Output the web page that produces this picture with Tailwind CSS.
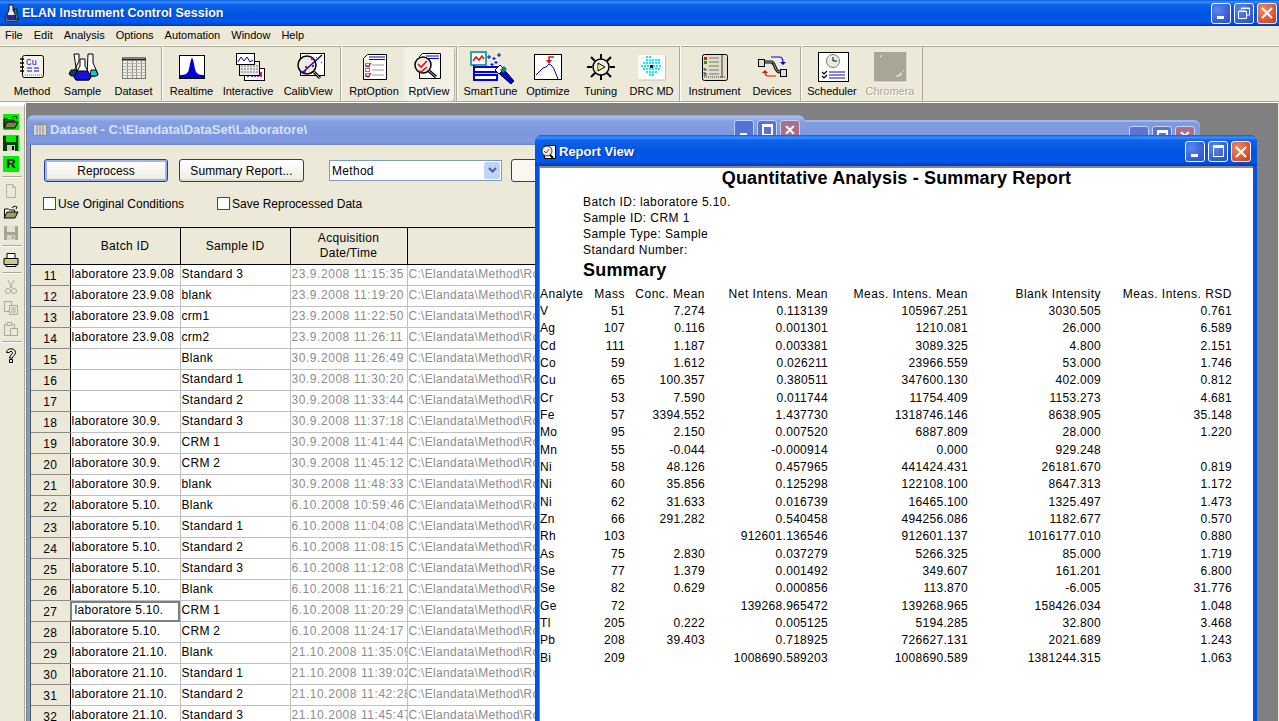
<!DOCTYPE html>
<html lang="en">
<head>
  <meta charset="UTF-8">
  <title>ELAN Instrument Control Session</title>
  <script src="https://cdn.jsdelivr.net/npm/@tailwindcss/browser@4"></script>
</head>
<body class="m-0 overflow-hidden bg-[#808080]">
<div class="relative flex h-[721px] w-[1279px] flex-col overflow-hidden font-['Liberation_Sans',Arial,sans-serif] text-[11px] text-black">

  <!-- main title bar -->
  <div class="flex h-[26px] shrink-0 items-center bg-[linear-gradient(180deg,#0a5fe8_0%,#3a8dfb_8%,#0d62ea_18%,#0054e3_55%,#0058ee_85%,#0046c8_94%,#003aa8_100%)] pl-[4px] pr-[2px]">
    <svg width="16" height="18" viewBox="0 0 16 18" class="mr-[2px]">
      <path d="M5 1h4v5l5 9-1 2H2l-1-2 4-9z" fill="#e8e8e8" stroke="#111"/>
      <path d="M3 11h8l2 4-1 1H3l-1-1z" fill="#2a2a8a"/>
      <path d="M10 5h3v6l2 4h-3z" fill="#1d9a9a" stroke="#111"/>
    </svg>
    <span class="text-[12.500px] font-bold text-white [text-shadow:1px_1px_0_#0a3aa0]">ELAN Instrument Control Session</span>
    <div class="ml-auto flex gap-[3px]">
      <div class="flex h-[21px] w-[20px] items-end rounded-[3px] border border-white bg-[radial-gradient(circle_at_30%_30%,#5c86ef,#2448c8)] pb-[4px] pl-[5px]"><div class="h-[3px] w-[7px] bg-white"></div></div>
      <div class="flex h-[21px] w-[20px] items-center justify-center rounded-[3px] border border-white bg-[radial-gradient(circle_at_30%_30%,#5c86ef,#2448c8)]">
        <svg width="12" height="12" viewBox="0 0 12 12" fill="none" stroke="#fff"><path d="M3.500 2.500V1h8v7H9"/><path d="M.5 4.500h8v7h-8z"/><path d="M1 4h7M4 1.500h7" stroke-width="1"/></svg>
      </div>
      <div class="flex h-[21px] w-[20px] items-center justify-center rounded-[3px] border border-white bg-[radial-gradient(circle_at_30%_30%,#ee8a66,#c93a14)]">
        <svg width="12" height="12" viewBox="0 0 12 12" stroke="#fff" stroke-width="2"><path d="M1 1l10 10M11 1L1 11"/></svg>
      </div>
    </div>
  </div>

  <!-- menu bar -->
  <div class="flex h-[19px] shrink-0 items-center gap-[11px] bg-[#ece9d8] pl-[5px]">
    <span>File</span><span>Edit</span><span>Analysis</span><span>Options</span><span>Automation</span><span>Window</span><span>Help</span>
  </div>

  <!-- toolbar -->
  <div class="flex h-[58px] shrink-0 border-y border-y-white bg-[#ece9d8] shadow-[inset_0_-1px_0_#a7a491,inset_0_1px_0_#aca899]">
    <div class="flex h-[55px] items-stretch border-r border-r-[#aca899] pl-[7px] pr-[2px] pt-[4px]">
      <div class="flex w-[50px] flex-col items-center">
        <svg width="40" height="34" viewBox="0 0 40 34" class="overflow-visible">
          <rect x="10.500" y="5.500" width="21" height="22" rx="2" fill="#f5f2e2" stroke="#000"/>
          <path d="M8 9h4M8 13h4M8 17h4M8 21h4" stroke="#000" stroke-width="1.500"/>
          <path d="M13 25h18" stroke="#777" stroke-dasharray="1 1"/>
          <text x="14" y="15" font-size="9" fill="#1010e0" font-family="Liberation Mono">Cu</text>
          <path d="M15 18h5M22 18h5M15 21h5M22 21h5" stroke="#1010e0"/>
        </svg>
        <span class="-mt-[1px]">Method</span>
      </div>
      <div class="flex w-[51px] flex-col items-center">
        <svg width="40" height="34" viewBox="0 0 40 34" class="overflow-visible">
          <path d="M11 4h5v7l-5 10-3 3h6z" fill="#fff" stroke="#000"/>
          <path d="M8 20l-2 4 2 2h7l3-6z" fill="#123a6a" stroke="#000"/>
          <path d="M25 4h5v9l5 11-3 2h-8z" fill="#fff" stroke="#000"/>
          <path d="M28 20h5l2 5-2 1h-6z" fill="#18c8c8" stroke="#000"/>
          <path d="M17 9h5v7l6 11-2 3H13l-2-3 6-11z" fill="#fff" stroke="#000"/>
          <path d="M14.500 21h10l3.500 6-2 3H13l-2-3z" fill="#1414d8" stroke="#000"/>
        </svg>
        <span class="-mt-[1px]">Sample</span>
      </div>
      <div class="flex w-[51px] flex-col items-center">
        <svg width="40" height="34" viewBox="0 0 40 34">
          <rect x="8.500" y="7.500" width="23" height="21" fill="#efece0" stroke="#777"/>
          <path d="M8 9.500h24" stroke="#222" stroke-width="2"/>
          <path d="M13.500 10v18M18.500 10v18M22.500 10v18M27.500 10v18" stroke="#8a8a8a"/>
          <path d="M9 13.500h22M9 16.500h22M9 19.500h22M9 22.500h22M9 25.500h22" stroke="#b5b5b5"/>
        </svg>
        <span class="-mt-[1px]">Dataset</span>
      </div>
    </div>
    <div class="flex h-[55px] items-stretch border-r border-l border-r-[#aca899] border-l-white pl-[2px] pr-[2px] pt-[4px]">
      <div class="flex w-[53px] flex-col items-center">
        <svg width="40" height="34" viewBox="0 0 40 34">
          <rect x="7.500" y="5.500" width="25" height="23" fill="#fff" stroke="#000"/>
          <path d="M8 25c5 0 8-1 9-6s2-11 3-11 2 6 3 11 4 6 9 6v3H8z" fill="#0000d0"/>
        </svg>
        <span class="-mt-[1px]">Realtime</span>
      </div>
      <div class="flex w-[60px] flex-col items-center">
        <svg width="40" height="34" viewBox="0 0 40 34" class="overflow-visible">
          <rect x="16.500" y="18.500" width="20" height="12" fill="#fff" stroke="#000"/>
          <path d="M20 27v-2M24 27v-4M27 27v-3M30 27v-5" stroke="#5040c0" stroke-width="2"/><path d="M33 27v-5" stroke="#e01060" stroke-width="2"/>
          <rect x="11.500" y="11.500" width="20" height="14" fill="#e8e8e8" stroke="#000"/>
          <path d="M13 16h17M13 19h17M13 22h17" stroke="#777" stroke-dasharray="2 1"/>
          <rect x="8.500" y="3.500" width="18" height="11" fill="#fff" stroke="#000"/>
          <path d="M10 12l3-5 3 4 3-4 3 5 3-2" fill="none" stroke="#0000d0"/>
        </svg>
        <span class="-mt-[1px]">Interactive</span>
      </div>
      <div class="flex w-[60px] flex-col items-center">
        <svg width="40" height="34" viewBox="0 0 40 34" class="overflow-visible">
          <rect x="12.500" y="3.500" width="24" height="22" fill="#fff" stroke="#000"/>
          <circle cx="19" cy="15" r="9" fill="#ecece4" stroke="#000" stroke-width="1.500"/>
          <path d="M14 23L34 5" stroke="#0000e0" stroke-width="1.500"/>
          <path d="M23 8h2v2h-2zM28 7h1v1h-1zM17 16h2v2h-2zM24 15h2v2h-2zM33 12h1v1h-1zM16 21h2v2h-2z" fill="#e01010"/>
          <path d="M26 22l6 6" stroke="#000" stroke-width="3"/><path d="M26 22l6 6" stroke="#bbb"/>
        </svg>
        <span class="-mt-[1px]">CalibView</span>
      </div>
    </div>
    <div class="flex h-[55px] items-stretch border-r border-l border-r-[#aca899] border-l-white pl-[2px] pr-[2px] pt-[4px]">
      <div class="flex w-[60px] flex-col items-center">
        <svg width="40" height="34" viewBox="0 0 40 34">
          <path d="M9.500 8.500l4-4h19v25h-23z" fill="#fff" stroke="#000"/>
          <path d="M15 7h16" stroke="#0000d0" stroke-width="1"/><path d="M15 9.500h16" stroke="#0000d0"/>
          <rect x="11.500" y="13.500" width="4" height="3" fill="#fff" stroke="#888"/><rect x="11.500" y="18.500" width="4" height="3" fill="#fff" stroke="#888"/><rect x="11.500" y="23.500" width="4" height="3" fill="#fff" stroke="#888"/>
          <path d="M12 15l2 2 3-4M12 25l2 2 3-4" fill="none" stroke="#e01010" stroke-width="1.200"/>
          <path d="M18 15h12M18 20h12M18 25h12" stroke="#999"/>
        </svg>
        <span class="-mt-[1px]">RptOption</span>
      </div>
      <div class="-mt-[3px] flex w-[50px] flex-col items-center rounded-[3px] bg-[#f3f1e6] pt-[3px] shadow-[1px_1px_1px_#b5b2a0]">
        <svg width="40" height="34" viewBox="0 0 40 34" class="overflow-visible">
          <path d="M10.500 6.500l3-3h18v25h-21z" fill="#fff" stroke="#000"/>
          <path d="M17 6h13M17 8.500h13" stroke="#0000d0"/>
          <circle cx="14" cy="15" r="8" fill="#ecece4" stroke="#000" stroke-width="1.500"/>
          <path d="M9 14l3 3 6-6M10 21l2 1 6-5" fill="none" stroke="#e01010" stroke-width="1.600"/>
          <path d="M20 21l7 6" stroke="#000" stroke-width="3"/><path d="M20 21l7 6" stroke="#bbb"/>
        </svg>
        <span class="-mt-[1px]">RptView</span>
      </div>
    </div>
    <div class="flex h-[55px] items-stretch border-r border-l border-r-[#aca899] border-l-white pl-[2px] pr-[2px] pt-[4px]">
      <div class="flex w-[61px] flex-col items-center">
        <svg width="48" height="34" viewBox="0 0 48 34" class="overflow-visible">
          <rect x="4" y="2" width="15" height="13" fill="#fff" stroke="#22a8a8" stroke-width="2"/>
          <path d="M6 11l3-4 3 3 3-4 2 3" fill="none" stroke="#e01010" stroke-width="1.500"/>
          <rect x="7" y="17" width="23" height="5" fill="#fff" stroke="#0000e0" stroke-width="2"/>
          <rect x="7" y="25" width="23" height="5" fill="#fff" stroke="#0000e0" stroke-width="2"/>
          <path d="M7 15v13" stroke="#0000e0" stroke-width="2"/>
          <path d="M28 20l5-5 14 16-3 3z" fill="#0000d0" stroke="#000"/>
          <path d="M28 20l5-5 4 4-5 5z" fill="#fff" stroke="#000"/>
          <path d="M33 20l4-4 3 3-4 4z" fill="#138080"/>
          <path d="M22 5v4M20 7h4M27 7v3M25.500 8.500h3M32 3v4M30 5h4M25 13v3M23.500 14.500h3M29 11v3M27.500 12.500h3" stroke="#0000e0"/>
        </svg>
        <span class="-mt-[1px]">SmartTune</span>
      </div>
      <div class="flex w-[54px] flex-col items-center">
        <svg width="40" height="34" viewBox="0 0 40 34">
          <rect x="6.500" y="4.500" width="27" height="25" fill="#fff" stroke="#000"/>
          <path d="M8 25l7-7 3-1 3-3 2 1 3 4 4 10" fill="none" stroke="#0000d0"/>
          <path d="M26 7h-5v5" fill="none" stroke="#e01010" stroke-width="1.500"/><path d="M18 10l3 4 3-4z" fill="#e01010"/>
        </svg>
        <span class="-mt-[1px]">Optimize</span>
      </div>
      <div class="flex w-[51px] flex-col items-center">
        <svg width="40" height="34" viewBox="0 0 40 34">
          <circle cx="20" cy="17" r="8" fill="#f2efdf" stroke="#000" stroke-width="1.500"/>
          <path d="M20 4v5M20 25v5M6 17h5M29 17h5M10 7l4 4M30 7l-4 4M10 27l4-4M30 27l-4-4" stroke="#000" stroke-width="2"/>
          <path d="M17 13l7 4-7 4z" fill="#e8e8e0" stroke="#000"/><path d="M17 15l3 2-3 2z" fill="#f0e020"/>
        </svg>
        <span class="-mt-[1px]">Tuning</span>
      </div>
      <div class="flex w-[51px] flex-col items-center">
        <svg width="40" height="34" viewBox="0 0 40 34">
          <rect x="6.500" y="5" width="27" height="25" fill="#fff"/>
          <path d="M33.500 5v25H6.500" fill="none" stroke="#c0c0c0"/>
          <path d="M14 6h2v2h-2zM17 6h2v2h-2zM14 9h2v2h-2zM17 9h2v2h-2zM20 9h2v2h-2zM23 9h2v2h-2zM26 9h2v2h-2zM11 12h2v2h-2zM14 12h2v2h-2zM17 12h2v2h-2zM20 12h2v2h-2zM23 12h2v2h-2zM26 12h2v2h-2zM9 15h2v2H9zM12 15h2v2h-2zM15 15h2v2h-2zM21 15h2v2h-2zM24 15h2v2h-2zM27 15h2v2h-2zM11 18h2v2h-2zM14 18h2v2h-2zM17 18h2v2h-2zM20 18h2v2h-2zM23 18h2v2h-2zM26 18h2v2h-2zM14 21h2v2h-2zM17 21h2v2h-2zM20 21h2v2h-2zM23 21h2v2h-2zM17 24h2v2h-2zM20 24h2v2h-2z" fill="#16eaea"/>
          <rect x="18" y="15" width="3" height="3" fill="#10107a"/>
        </svg>
        <span class="-mt-[1px]">DRC MD</span>
      </div>
    </div>
    <div class="flex h-[55px] items-stretch border-r border-l border-r-[#aca899] border-l-white pl-[2px] pr-[2px] pt-[4px]">
      <div class="flex w-[63px] flex-col items-center">
        <svg width="40" height="34" viewBox="0 0 40 34">
          <rect x="7.500" y="4.500" width="25" height="26" rx="2" fill="#e2dec8" stroke="#000"/>
          <path d="M9 7h3v3H9z" fill="#e01010"/><path d="M9 11h3v3H9z" fill="#10a010"/>
          <path d="M14 8h10M14 12h10M14 16h10M14 20h10M14 24h10M9 18v2h3M9 22v2h3M9 26v-1h3" stroke="#777"/>
          <path d="M27 5v23" stroke="#333"/><path d="M9 27h22" stroke="#333" stroke-dasharray="1 1"/>
        </svg>
        <span class="-mt-[1px]">Instrument</span>
      </div>
      <div class="flex w-[52px] flex-col items-center">
        <svg width="40" height="34" viewBox="0 0 40 34">
          <rect x="6.500" y="9.500" width="6" height="7" fill="#ddd" stroke="#000"/><rect x="28.500" y="19.500" width="6" height="7" fill="#ddd" stroke="#000"/>
          <path d="M13 12h6c5 0 3 10 9 10" fill="none" stroke="#000" stroke-width="3"/><path d="M13 12h6c5 0 3 10 9 10" fill="none" stroke="#bbb"/>
          <path d="M19 7h8c3 0 4 2 4 5" fill="none" stroke="#0000e0" stroke-width="1.200"/><path d="M28 12h6l-3 3z" fill="#0000e0"/>
          <path d="M24 26h-8c-2 0-3-1-3-4" fill="none" stroke="#e01010" stroke-width="1.200"/><path d="M10 23l3-3 3 3z" fill="#e01010"/>
        </svg>
        <span class="-mt-[1px]">Devices</span>
      </div>
    </div>
    <div class="flex h-[55px] items-stretch border-l border-r border-l-white border-r-[#aca899] pl-[2px] pr-[2px] pt-[4px]">
      <div class="flex w-[56px] flex-col items-center">
        <svg width="40" height="34" viewBox="0 0 40 34">
          <rect x="6.500" y="2.500" width="30" height="29" fill="#fff" stroke="#000"/>
          <circle cx="21" cy="11" r="6.500" fill="#ecebdc" stroke="#777"/>
          <path d="M21 7v4h4" fill="none" stroke="#000"/>
          <path d="M17 22h16M17 25h16M17 28h16" stroke="#10109a"/>
          <path d="M10 22l2 2 3-3M10 26l2 2 3-3" fill="none" stroke="#000" stroke-width="1.200"/>
        </svg>
        <span class="-mt-[1px]">Scheduler</span>
      </div>
      <div class="flex w-[60px] flex-col items-center">
        <svg width="40" height="34" viewBox="0 0 40 34" class="overflow-visible">
          <rect x="4" y="2" width="33" height="30" fill="#a9a597"/>
          <path d="M37 2v30H4" fill="none" stroke="#f7f6ef"/>
          <path d="M10 7l2-2M30 23h1v2h-2v1h-3M33 21h1" stroke="#f7f6ef" fill="none"/>
        </svg>
        <span class="-mt-[1px] text-[#a9a597] [text-shadow:1px_1px_0_#fff]">Chromera</span>
      </div>
    </div>
  </div>

  <!-- workspace -->
  <div class="relative flex min-h-0 flex-1 bg-[#808080]">
    <!-- left toolbar -->
    <div class="flex w-[25px] shrink-0 flex-col border-t-[3px] border-r border-t-white border-r-[#aca899] bg-[#ece9d8] pl-[3px] pt-[5px] shadow-[1px_0_0_#f8f7f0]">
      <div class="flex h-[21px] items-center"><svg width="16" height="16" viewBox="0 0 16 16"><rect width="16" height="16" fill="#00f000"/><path d="M1 13V5h4l1 1h5v2" fill="#008000" stroke="#000"/><path d="M1 14l3-6h11l-3 6z" fill="#808040" stroke="#000"/><path d="M9 4c1-2 3-2 5-1l-1 2" fill="none" stroke="#000"/></svg></div>
      <div class="flex h-[21px] items-center"><svg width="16" height="16" viewBox="0 0 16 16"><rect width="16" height="16" fill="#00f000"/><path d="M0 1h15v15H0z" fill="#004000"/><path d="M3 1h10v6H3z" fill="#00f000"/><path d="M4 10h8v6H4z" fill="#c0d0c0"/><path d="M9 11h2v4H9z" fill="#000"/></svg></div>
      <div class="flex h-[21px] items-center"><div class="flex h-[16px] w-[16px] items-center justify-center bg-[#00f000] text-[13px] font-bold leading-none">R</div></div>
      <div class="mb-[2px] mt-[2px] h-[2px] w-[20px] -translate-x-[1px] border-y border-y-[#aca899] border-b-white"></div>
      <div class="flex h-[21px] items-center"><svg width="16" height="16" viewBox="0 0 16 16"><path d="M3.500 1.500h6l3 3v10h-9z" fill="#ece9d8" stroke="#b5b2a0"/><path d="M9.500 1.500v3h3" fill="none" stroke="#b5b2a0"/></svg></div>
      <div class="flex h-[21px] items-center"><svg width="16" height="16" viewBox="0 0 16 16"><path d="M1.500 13V5h4l1 1h5v2" fill="#fff" stroke="#000"/><path d="M1 14l3-6h11l-3 6z" fill="#a09c70" stroke="#000"/><path d="M9 4c1-2 3-2 5-1l-1 2" fill="none" stroke="#000"/></svg></div>
      <div class="flex h-[21px] items-center"><svg width="16" height="16" viewBox="0 0 16 16"><path d="M1 1h14v14H1z" fill="#a8a596"/><path d="M4 1h8v6H4z" fill="#e4e1d2"/><path d="M4 10h8v5H4z" fill="#d8d5c6"/><path d="M9 11h2v3H9z" fill="#a8a596"/></svg></div>
      <div class="mb-[2px] mt-[2px] h-[2px] w-[20px] -translate-x-[1px] border-y border-y-[#aca899] border-b-white"></div>
      <div class="flex h-[21px] items-center"><svg width="16" height="16" viewBox="0 0 16 16"><path d="M4 1.500h8v5H4z" fill="#fff" stroke="#000"/><path d="M1 6.500h14v6H1z" fill="#c8c5b5" stroke="#000"/><path d="M3 12.500h10v2H3z" fill="#fff" stroke="#000"/><path d="M3 9h6" stroke="#e0d020" stroke-width="2"/></svg></div>
      <div class="mb-[2px] mt-[2px] h-[2px] w-[20px] -translate-x-[1px] border-y border-y-[#aca899] border-b-white"></div>
      <div class="flex h-[21px] items-center"><svg width="16" height="16" viewBox="0 0 16 16" fill="none" stroke="#aca899"><path d="M5 1l4 8M11 1L7 9"/><circle cx="5" cy="12" r="2.500"/><circle cx="11" cy="12" r="2.500"/></svg></div>
      <div class="flex h-[21px] items-center"><svg width="16" height="16" viewBox="0 0 16 16" fill="#ece9d8" stroke="#aca899"><path d="M1.500 1.500h7v10h-7z"/><path d="M6.500 5.500h8v9h-8z"/><path d="M8 8h5M8 10h5M8 12h5"/></svg></div>
      <div class="flex h-[21px] items-center"><svg width="16" height="16" viewBox="0 0 16 16" fill="#ece9d8" stroke="#aca899"><path d="M1.500 3.500h10v11h-10z"/><path d="M4 1.500h5v3H4z"/><path d="M7.500 7.500h7v7h-7z"/></svg></div>
      <div class="mb-[2px] mt-[2px] h-[2px] w-[20px] -translate-x-[1px] border-y border-y-[#aca899] border-b-white"></div>
      <div class="flex h-[21px] items-center pl-[2px]"><svg width="12" height="15" viewBox="0 0 12 15" fill="#ece9d8" stroke="#000"><path d="M1.500 4.500c0-5 9-5 9 0 0 3-3 3-3 5.500h-3c0-3 3-3 3-5.500 0-1.500-3-1.500-3 0z"/><path d="M4.500 11.500h3v3h-3z"/></svg></div>
    </div>

    <!-- window behind dataset -->
    <div class="absolute left-[725px] top-[17px] h-[40px] w-[475px] rounded-t-[6px] bg-[#7f9be0] shadow-[inset_0_2px_0_#a2b7ea]">
      <div class="absolute right-[5px] top-[6px] flex gap-[3px]">
        <div class="h-[21px] w-[20px] rounded-[3px] border border-[#c5d2f0] bg-[#5b74d2]"></div>
        <div class="h-[21px] w-[20px] rounded-[3px] border border-[#c5d2f0] bg-[#5b74d2] pl-[4px] pt-[3px]"><div class="h-[12px] w-[11px] border-2 border-t-[3px] border-white"></div></div>
        <div class="h-[21px] w-[20px] rounded-[3px] border border-[#c5d2f0] bg-[#ab7089] text-center text-[14px] font-bold leading-[18px] text-white">✕</div>
      </div>
    </div>

    <!-- dataset window -->
    <div class="absolute left-[27px] top-[12px] flex h-[700px] w-[778px] flex-col rounded-t-[7px] bg-[#7f9be0]">
      <div class="relative flex h-[30px] shrink-0 items-center rounded-t-[7px] bg-[linear-gradient(180deg,#8fa9e8_0%,#a8bdf0_8%,#86a0e2_20%,#7c97dd_60%,#7f9ae0_90%,#6f86c8_100%)] pl-[6px]">
        <svg width="14" height="14" viewBox="0 0 14 14" class="mr-[3px]"><rect x=".5" y="1.500" width="13" height="11" fill="#d8d8d8" stroke="#8a8a8a"/><path d="M4 2v10M7 2v10M10 2v10" stroke="#8a8a8a"/></svg>
        <span class="text-[13px] font-bold text-[#d8e3fa]">Dataset - C:\Elandata\DataSet\Laboratore\</span>
        <div class="absolute right-[5px] top-[5px] flex gap-[3px]">
          <div class="flex h-[21px] w-[20px] items-end rounded-[3px] border border-[#c5d2f0] bg-[#5572d6] pb-[4px] pl-[5px]"><div class="h-[3px] w-[7px] bg-white"></div></div>
          <div class="h-[21px] w-[20px] rounded-[3px] border border-[#c5d2f0] bg-[#5b74d2] pl-[4px] pt-[3px]"><div class="h-[12px] w-[11px] border-2 border-t-[3px] border-white"></div></div>
          <div class="h-[21px] w-[20px] rounded-[3px] border border-[#c5d2f0] bg-[#ab7089] text-center text-[14px] font-bold leading-[18px] text-white">✕</div>
        </div>
      </div>
      <div class="mx-[3px] flex-1 border-l border-l-[#555] bg-[#ece9d8] text-[12px]">
        <div class="flex h-[47px] items-start pl-[13px] pt-[14px]">
          <div class="flex h-[23px] w-[124px] items-center justify-center rounded-[3px] border border-[#1c3f94] bg-[linear-gradient(180deg,#fff,#f0efe6_85%,#dcd9c8)] shadow-[inset_0_0_0_2px_#9cb8ea]">Reprocess</div>
          <div class="ml-[11px] flex h-[23px] w-[125px] items-center justify-center rounded-[3px] border border-[#1c3f94] bg-[linear-gradient(180deg,#fff,#f0efe6_85%,#dcd9c8)] tracking-[0.1px]">Summary Report...</div>
          <div class="ml-[25px] mt-[1px] flex h-[21px] w-[173px] items-center justify-between border border-[#7f9db9] bg-white pl-[2px] pr-[1px] tracking-[0.3px]">
            <span>Method</span>
            <div class="flex h-[17px] w-[16px] items-center justify-center rounded-[2px] bg-[#c1d2fb]"><svg width="9" height="7" viewBox="0 0 9 7" fill="none" stroke="#4d6185" stroke-width="2"><path d="M1 1l3.500 3.500L8 1"/></svg></div>
          </div>
          <div class="ml-[9px] h-[23px] w-[60px] rounded-[3px] border border-[#1c3f94] bg-[#f8f7f0]"></div>
        </div>
        <div class="flex h-[35px] items-start pl-[12px] pt-[5px] leading-[14px]">
          <div class="h-[13px] w-[13px] border border-[#1c5180] bg-white"></div>
          <span class="ml-[2px] w-[159px]">Use Original Conditions</span>
          <div class="h-[13px] w-[13px] border border-[#1c5180] bg-white"></div>
          <span class="ml-[2px]">Save Reprocessed Data</span>
        </div>
        <table class="w-[504px] table-fixed border-collapse bg-white text-[12px] tracking-[0.3px] [&_td]:h-[21px] [&_td]:overflow-hidden [&_td]:border-r [&_td]:border-b [&_td]:border-[#c0c0c0] [&_td]:pl-[1px] [&_td]:pb-[2px] [&_td]:whitespace-nowrap [&_td:first-child]:border-b-[#8a8a8a] [&_td:first-child]:border-r-black [&_td:first-child]:bg-[#ece9d8] [&_td:first-child]:pl-0 [&_td:first-child]:pb-0 [&_td:first-child]:pt-[1px] [&_td:first-child]:text-center [&_td:nth-child(2)]:border-r-[#c0c0c0] [&_td:nth-child(4)]:tracking-[0.55px] [&_td:nth-child(4)]:text-[#8c8c8c] [&_td:nth-child(5)]:text-[#8c8c8c] [&_td:nth-child(5)]:border-r-0 [&_th]:border-y [&_th]:border-r [&_th]:border-black [&_th]:bg-[#ece9d8] [&_th]:font-normal [&_th]:leading-[15px]">
          <colgroup><col class="w-[39px]"><col class="w-[110px]"><col class="w-[110px]"><col class="w-[117px]"><col class="w-[128px]"></colgroup>
          <tr class="h-[37px]"><th></th><th>Batch ID</th><th>Sample ID</th><th>Acquisition<br>Date/Time</th><th class="border-r-0"></th></tr>
          <tr><td>11</td><td>laboratore 23.9.08</td><td>Standard 3</td><td>23.9.2008 11:15:35</td><td>C:\Elandata\Method\Ro</td></tr>
          <tr><td>12</td><td>laboratore 23.9.08</td><td>blank</td><td>23.9.2008 11:19:20</td><td>C:\Elandata\Method\Ro</td></tr>
          <tr><td>13</td><td>laboratore 23.9.08</td><td>crm1</td><td>23.9.2008 11:22:50</td><td>C:\Elandata\Method\Ro</td></tr>
          <tr><td>14</td><td>laboratore 23.9.08</td><td>crm2</td><td>23.9.2008 11:26:11</td><td>C:\Elandata\Method\Ro</td></tr>
          <tr><td>15</td><td></td><td>Blank</td><td>30.9.2008 11:26:49</td><td>C:\Elandata\Method\Ro</td></tr>
          <tr><td>16</td><td></td><td>Standard 1</td><td>30.9.2008 11:30:20</td><td>C:\Elandata\Method\Ro</td></tr>
          <tr><td>17</td><td></td><td>Standard 2</td><td>30.9.2008 11:33:44</td><td>C:\Elandata\Method\Ro</td></tr>
          <tr><td>18</td><td>laboratore 30.9.</td><td>Standard 3</td><td>30.9.2008 11:37:18</td><td>C:\Elandata\Method\Ro</td></tr>
          <tr><td>19</td><td>laboratore 30.9.</td><td>CRM 1</td><td>30.9.2008 11:41:44</td><td>C:\Elandata\Method\Ro</td></tr>
          <tr><td>20</td><td>laboratore 30.9.</td><td>CRM 2</td><td>30.9.2008 11:45:12</td><td>C:\Elandata\Method\Ro</td></tr>
          <tr><td>21</td><td>laboratore 30.9.</td><td>blank</td><td>30.9.2008 11:48:33</td><td>C:\Elandata\Method\Ro</td></tr>
          <tr><td>22</td><td>laboratore 5.10.</td><td>Blank</td><td>6.10.2008 10:59:46</td><td>C:\Elandata\Method\Ro</td></tr>
          <tr><td>23</td><td>laboratore 5.10.</td><td>Standard 1</td><td>6.10.2008 11:04:08</td><td>C:\Elandata\Method\Ro</td></tr>
          <tr><td>24</td><td>laboratore 5.10.</td><td>Standard 2</td><td>6.10.2008 11:08:15</td><td>C:\Elandata\Method\Ro</td></tr>
          <tr><td>25</td><td>laboratore 5.10.</td><td>Standard 3</td><td>6.10.2008 11:12:08</td><td>C:\Elandata\Method\Ro</td></tr>
          <tr><td>26</td><td>laboratore 5.10.</td><td>Blank</td><td>6.10.2008 11:16:21</td><td>C:\Elandata\Method\Ro</td></tr>
          <tr><td>27</td><td class="outline-2 -outline-offset-2 outline-[#808080] !pl-[4px]">laboratore 5.10.</td><td>CRM 1</td><td>6.10.2008 11:20:29</td><td>C:\Elandata\Method\Ro</td></tr>
          <tr><td>28</td><td>laboratore 5.10.</td><td>CRM 2</td><td>6.10.2008 11:24:17</td><td>C:\Elandata\Method\Ro</td></tr>
          <tr><td>29</td><td>laboratore 21.10.</td><td>Blank</td><td>21.10.2008 11:35:09</td><td>C:\Elandata\Method\Ro</td></tr>
          <tr><td>30</td><td>laboratore 21.10.</td><td>Standard 1</td><td>21.10.2008 11:39:02</td><td>C:\Elandata\Method\Ro</td></tr>
          <tr><td>31</td><td>laboratore 21.10.</td><td>Standard 2</td><td>21.10.2008 11:42:28</td><td>C:\Elandata\Method\Ro</td></tr>
          <tr><td>32</td><td>laboratore 21.10.</td><td>Standard 3</td><td>21.10.2008 11:45:47</td><td>C:\Elandata\Method\Ro</td></tr>
        </table>
      </div>
    </div>

    <!-- report view window -->
    <div class="absolute left-[535px] top-[32px] flex h-[600px] w-[722px] flex-col rounded-t-[7px] bg-[#0054e3]">
      <div class="relative flex h-[31px] shrink-0 items-center rounded-t-[7px] bg-[linear-gradient(180deg,#0a5fe8_0%,#3a8dfb_8%,#0d62ea_18%,#0054e3_55%,#0058ee_85%,#0046c8_94%,#003aa8_100%)] pl-[6px] pt-[3px]">
        <svg width="16" height="16" viewBox="0 0 16 16" class="mr-[2px]"><path d="M3.500 1.500h11v13h-11z" fill="#fff" stroke="#000"/><circle cx="6" cy="7" r="5" fill="#eee" stroke="#333"/><path d="M3 7l2 2 3-4" fill="none" stroke="#e01010"/><path d="M9 11l3 3" stroke="#000" stroke-width="2"/></svg>
        <span class="text-[13px] font-bold text-white [text-shadow:1px_1px_0_#0a3aa0]">Report View</span>
        <div class="absolute right-[6px] top-[6px] flex gap-[3px]">
          <div class="flex h-[21px] w-[20px] items-end rounded-[3px] border border-white bg-[radial-gradient(circle_at_30%_30%,#5c86ef,#2448c8)] pb-[4px] pl-[5px]"><div class="h-[3px] w-[7px] bg-white"></div></div>
          <div class="h-[21px] w-[20px] rounded-[3px] border border-white bg-[radial-gradient(circle_at_30%_30%,#5c86ef,#2448c8)] pl-[4px] pt-[3px]"><div class="h-[12px] w-[11px] border border-t-[3px] border-white"></div></div>
          <div class="flex h-[21px] w-[20px] items-center justify-center rounded-[3px] border border-white bg-[radial-gradient(circle_at_30%_30%,#ee8a66,#c93a14)]"><svg width="12" height="12" viewBox="0 0 12 12" stroke="#fff" stroke-width="2"><path d="M1 1l10 10M11 1L1 11"/></svg></div>
        </div>
      </div>
      <div class="mx-[4px] flex-1 border-t-2 border-l border-t-[#8a8a80] border-l-[#8a8a80] bg-white text-[12px] tracking-[0.3px]">
        <div class="h-[24px] text-center text-[18px] font-bold leading-[20px] tracking-[0.16px]">Quantitative Analysis - Summary Report</div>
        <div class="pl-[43px] pt-[2px] leading-[16.300px] tracking-[0.42px]">
          <div>Batch ID: laboratore 5.10.</div>
          <div>Sample ID: CRM 1</div>
          <div class="-mt-[.5px]">Sample Type: Sample</div>
          <div class="-mt-[.5px]">Standard Number:</div>
          <div class="mt-[1px] text-[18px] font-bold leading-[22px] tracking-[0.2px]">Summary</div>
        </div>
        <table class="mt-[6px] table-fixed border-collapse [&_td]:h-[17.350px] [&_td]:p-0 [&_td]:text-right [&_td]:leading-none [&_td:first-child]:text-left [&_th]:h-[15px] [&_th]:p-0 [&_th]:text-right [&_th]:font-normal [&_th]:leading-[15px] [&_th]:tracking-[0.5px] [&_th:first-child]:text-left">
          <colgroup><col class="w-[45px]"><col class="w-[40px]"><col class="w-[80px]"><col class="w-[123px]"><col class="w-[140px]"><col class="w-[133px]"><col class="w-[131px]"></colgroup>
          <tr><th>Analyte</th><th>Mass</th><th>Conc. Mean</th><th>Net Intens. Mean</th><th>Meas. Intens. Mean</th><th>Blank Intensity</th><th>Meas. Intens. RSD</th></tr>
          <tr><td>V</td><td>51</td><td>7.274</td><td>0.113139</td><td>105967.251</td><td>3030.505</td><td>0.761</td></tr>
          <tr><td>Ag</td><td>107</td><td>0.116</td><td>0.001301</td><td>1210.081</td><td>26.000</td><td>6.589</td></tr>
          <tr><td>Cd</td><td>111</td><td>1.187</td><td>0.003381</td><td>3089.325</td><td>4.800</td><td>2.151</td></tr>
          <tr><td>Co</td><td>59</td><td>1.612</td><td>0.026211</td><td>23966.559</td><td>53.000</td><td>1.746</td></tr>
          <tr><td>Cu</td><td>65</td><td>100.357</td><td>0.380511</td><td>347600.130</td><td>402.009</td><td>0.812</td></tr>
          <tr><td>Cr</td><td>53</td><td>7.590</td><td>0.011744</td><td>11754.409</td><td>1153.273</td><td>4.681</td></tr>
          <tr><td>Fe</td><td>57</td><td>3394.552</td><td>1.437730</td><td>1318746.146</td><td>8638.905</td><td>35.148</td></tr>
          <tr><td>Mo</td><td>95</td><td>2.150</td><td>0.007520</td><td>6887.809</td><td>28.000</td><td>1.220</td></tr>
          <tr><td>Mn</td><td>55</td><td>-0.044</td><td>-0.000914</td><td>0.000</td><td>929.248</td><td></td></tr>
          <tr><td>Ni</td><td>58</td><td>48.126</td><td>0.457965</td><td>441424.431</td><td>26181.670</td><td>0.819</td></tr>
          <tr><td>Ni</td><td>60</td><td>35.856</td><td>0.125298</td><td>122108.100</td><td>8647.313</td><td>1.172</td></tr>
          <tr><td>Ni</td><td>62</td><td>31.633</td><td>0.016739</td><td>16465.100</td><td>1325.497</td><td>1.473</td></tr>
          <tr><td>Zn</td><td>66</td><td>291.282</td><td>0.540458</td><td>494256.086</td><td>1182.677</td><td>0.570</td></tr>
          <tr><td>Rh</td><td>103</td><td></td><td>912601.136546</td><td>912601.137</td><td>1016177.010</td><td>0.880</td></tr>
          <tr><td>As</td><td>75</td><td>2.830</td><td>0.037279</td><td>5266.325</td><td>85.000</td><td>1.719</td></tr>
          <tr><td>Se</td><td>77</td><td>1.379</td><td>0.001492</td><td>349.607</td><td>161.201</td><td>6.800</td></tr>
          <tr><td>Se</td><td>82</td><td>0.629</td><td>0.000856</td><td>113.870</td><td>-6.005</td><td>31.776</td></tr>
          <tr><td>Ge</td><td>72</td><td></td><td>139268.965472</td><td>139268.965</td><td>158426.034</td><td>1.048</td></tr>
          <tr><td>Tl</td><td>205</td><td>0.222</td><td>0.005125</td><td>5194.285</td><td>32.800</td><td>3.468</td></tr>
          <tr><td>Pb</td><td>208</td><td>39.403</td><td>0.718925</td><td>726627.131</td><td>2021.689</td><td>1.243</td></tr>
          <tr><td>Bi</td><td>209</td><td></td><td>1008690.589203</td><td>1008690.589</td><td>1381244.315</td><td>1.063</td></tr>
        </table>
      </div>
    </div>

    <!-- right edge strip -->
    <div class="absolute right-0 top-0 h-full w-[1px] bg-[#ece9d8]"></div>
  </div>
</div>
</body>
</html>
